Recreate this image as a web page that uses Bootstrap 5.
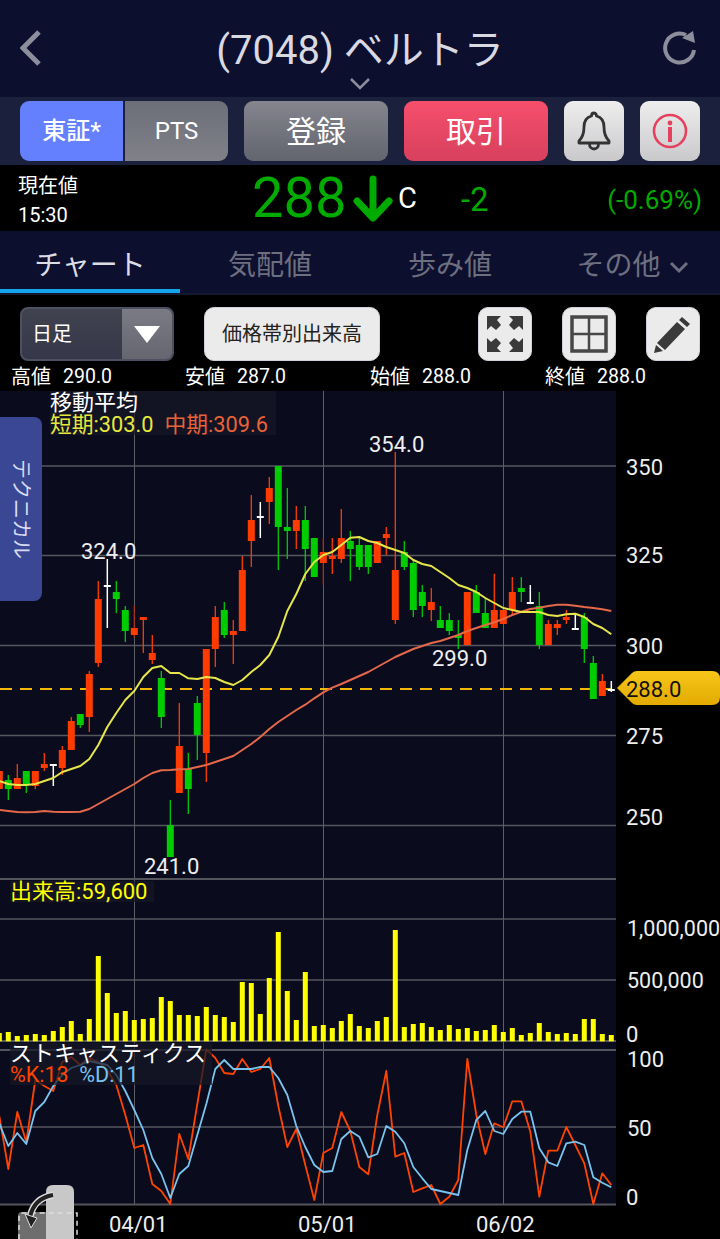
<!DOCTYPE html>
<html lang="ja">
<head>
<meta charset="utf-8">
<title>ベルトラ</title>
<link href="https://cdn.jsdelivr.net/npm/bootstrap@5.3.0/dist/css/bootstrap.min.css" rel="stylesheet">
<style>
html,body{margin:0;background:#000;width:720px;height:1239px;overflow:hidden}
body,svg text{font-family:Roboto,"Noto Sans CJK JP",sans-serif}
.app-head{height:97px;background:#0d0f2e;color:#d9d9e2}
.head-title{font-size:40px;line-height:46px;letter-spacing:0;white-space:nowrap;top:28px}
.head-caret{left:349px;top:77px}
.head-back{left:20px;top:30px}
.head-reload{left:662px;top:30px}
.toolbar-strip{height:68px;background:#1b203c;padding:4px 20px 4px}
.tool-btn{height:60px;border:0;border-radius:9px;color:#fff;padding:0;display:flex;align-items:center;justify-content:center}
.seg-blue{width:103px;border-radius:9px 0 0 9px;background:#6480ff;font-size:24px;font-weight:500}
.seg-gray{width:103px;margin-left:2px;border-radius:0 9px 9px 0;background:linear-gradient(#6c6e78,#808189);font-size:24px}
.wide-gray{width:144px;margin-left:16px;background:linear-gradient(#84858d,#62646e);font-size:30px}
.wide-red{width:144px;margin-left:16px;background:linear-gradient(#f64f6c,#d7405d);font-size:30px}
.square-btn{width:60px;margin-left:16px;background:linear-gradient(#eeeeee,#c9c9cc)}
.price-strip{height:66px;background:#000;color:#fff}
.price-label{width:234px;padding-left:18px;font-size:20px;line-height:29px;padding-top:7px}
.price-big{font-size:56px;line-height:66px;color:#00ab00;width:101px;margin-left:18px}
.price-arrow{margin-left:0;margin-top:9px}
.price-c{font-size:29px;margin-left:5px;line-height:66px}
.price-diff{font-size:33px;color:#00ab00;margin-left:44px;line-height:70px}
.price-pct{font-size:26px;color:#00ab00;margin-left:auto;padding-right:18px;line-height:70px}
.tab-strip{height:64px;background:#0d0f2e;border-bottom:2px solid #14182e}
.tab-cell{width:180px;font-size:28px;line-height:70px;color:#6d6f80;text-align:center;height:62px;white-space:nowrap}
.tab-active{color:#dcdce4;border-bottom:4px solid #13a4ec}
.tab-more{padding-left:5px}
.tools-strip{height:70px;background:#000;padding:12px 20px 0}
.range-select{width:154px;height:54px;border:2px solid #4d5060;border-radius:8px;overflow:hidden;background:linear-gradient(#40424f,#36384a)}
.range-text{flex:1;color:#fff;font-size:20px;line-height:50px;padding-left:10px}
.range-arrow{width:50px;background:linear-gradient(#7a7b84,#65666f);display:flex;align-items:center;justify-content:center}
.light-btn{height:54px;background:#ebebeb;border:1px solid #d0d0d8;border-radius:10px;color:#222;display:flex;align-items:center;justify-content:center;padding:0}
.profile-btn{width:176px;margin-left:30px;font-size:20px}
.icon-btn{width:54px}
.icon-gap{margin-left:30px}
.ohlc-strip{height:26px;background:#000;color:#fff;font-size:20px;line-height:24px;padding-left:11px;white-space:nowrap}
.ohlc-cell{display:flex}
.ohlc-cell span:last-child{margin-left:12px;font-size:19.5px}
.ohlc-a{width:174px}.ohlc-b{width:185px}.ohlc-c{width:175px}
.chart-wrap{height:848px;width:720px}
.chart-wrap svg{display:block}
.tech-tab{left:0;top:26px;width:42px;height:184px;background:#3a4794;border-radius:0 8px 8px 0;color:#d8dcf2;font-size:20px;writing-mode:vertical-rl;text-orientation:sideways;display:flex;align-items:center;justify-content:center;letter-spacing:0}
.legend-box{background:rgba(22,24,38,.72);color:#fff;white-space:nowrap}
.ma-legend{left:50px;top:0;width:226px;height:44px;font-size:22px;line-height:22px}
.ma-legend div:first-child{margin-top:1px}
.ma-legend div:last-child{font-size:21.8px;line-height:22px}
.vol-legend{left:10px;top:490px;width:144px;height:21px;font-size:22px;line-height:21px;color:#ff0}
.st-legend{left:10px;top:652px;width:202px;height:42px;font-size:22px;line-height:22px}
.st-legend div:last-child{font-size:21.5px;line-height:20px}
.tone-yellow{color:#e8e83c}.tone-orange{color:#e8623a}.tone-red{color:#ff4400}.tone-blue{color:#79c3ee}
</style>
</head>
<body>
<header class="app-head position-relative">
  <svg class="head-back position-absolute" width="24" height="38" viewBox="0 0 24 38"><path d="M19 2 3 18l16 16" fill="none" stroke="#8d8e9c" stroke-width="5"/></svg>
  <div class="head-title position-absolute w-100 text-center">(7048) ベルトラ</div>
  <svg class="head-caret position-absolute" width="22" height="14" viewBox="0 0 22 14"><path d="M2 2l9 9 9-9" fill="none" stroke="#8d8e9c" stroke-width="2.5"/></svg>
  <svg class="head-reload position-absolute" width="36" height="36" viewBox="0 0 36 36"><path d="M32 20A14.500 14.500 0 1 1 24 5" fill="none" stroke="#8d8e9c" stroke-width="4"/><path d="M20 8 31 1l2 12z" fill="#8d8e9c"/></svg>
</header>
<div class="toolbar-strip d-flex">
  <button class="tool-btn seg-blue">東証*</button>
  <button class="tool-btn seg-gray">PTS</button>
  <button class="tool-btn wide-gray">登録</button>
  <button class="tool-btn wide-red">取引</button>
  <button class="tool-btn square-btn"><svg width="36" height="40" viewBox="0 0 36 40"><path d="M18 2c-2 0-2.500 1.500-2.500 3C9.500 6.500 8 11 8 16c0 8-2 11-5 14v2h30v-2c-3-3-5-6-5-14 0-5-1.500-9.500-7.500-11 0-1.500-.5-3-2.500-3zM13.500 33c0 3 2 5 4.500 5s4.500-2 4.500-5" fill="none" stroke="#333" stroke-width="2.800" stroke-linejoin="round"/></svg></button>
  <button class="tool-btn square-btn"><svg width="36" height="36" viewBox="0 0 36 36"><circle cx="18" cy="18" r="16" fill="none" stroke="#e5415f" stroke-width="2.600"/><circle cx="18" cy="10" r="2.400" fill="#e5415f"/><rect x="16" y="14" width="4" height="15" fill="#e5415f"/></svg></button>
</div>
<div class="price-strip d-flex">
  <div class="price-label">現在値<br>15:30</div>
  <div class="price-big">288</div>
  <svg class="price-arrow" width="40" height="48" viewBox="0 0 40 48"><path d="M20 5v38M4 27l16 17 16-17" fill="none" stroke="#00ab00" stroke-width="7" stroke-linecap="round" stroke-linejoin="round"/></svg>
  <div class="price-c">C</div>
  <div class="price-diff">-2</div>
  <div class="price-pct">(-0.69%)</div>
</div>
<nav class="tab-strip d-flex">
  <div class="tab-cell tab-active">チャート</div>
  <div class="tab-cell">気配値</div>
  <div class="tab-cell">歩み値</div>
  <div class="tab-cell tab-more">その他<svg width="20" height="14" viewBox="0 0 20 14" class="ms-2"><path d="M2 2l8 8 8-8" fill="none" stroke="#6d6f80" stroke-width="3"/></svg></div>
</nav>
<div class="tools-strip d-flex">
  <div class="range-select d-flex"><div class="range-text">日足</div><div class="range-arrow"><svg width="26" height="18" viewBox="0 0 26 18"><path d="M0 1h26L13 18z" fill="#fff"/></svg></div></div>
  <button class="light-btn profile-btn">価格帯別出来高</button>
  <button class="light-btn icon-btn ms-auto"><svg width="40" height="40" viewBox="0 0 40 40" fill="#3a3a3a"><path id="ex" d="M2 2h14l-4 4 4 5-5 5-5-4-4 4z"/><path d="M2 2h14l-4 4 4 5-5 5-5-4-4 4z" transform="matrix(-1 0 0 1 40 0)"/><path d="M2 2h14l-4 4 4 5-5 5-5-4-4 4z" transform="matrix(1 0 0 -1 0 40)"/><path d="M2 2h14l-4 4 4 5-5 5-5-4-4 4z" transform="matrix(-1 0 0 -1 40 40)"/></svg></button>
  <button class="light-btn icon-btn icon-gap"><svg width="38" height="38" viewBox="0 0 38 38" fill="none" stroke="#474747"><rect x="2" y="2" width="34" height="34" stroke-width="3.500"/><path d="M19 2v34M2 19h34" stroke-width="2.500"/></svg></button>
  <button class="light-btn icon-btn icon-gap"><svg width="40" height="40" viewBox="0 0 40 40" fill="#3a3a3a"><path d="M29 3l8 7-3 3-8-7zM24 8l8 7-20 21-8-7zM3 31l7 6-9 2z"/></svg></button>
</div>
<div class="ohlc-strip d-flex">
  <div class="ohlc-cell ohlc-a"><span>高値</span><span>290.0</span></div>
  <div class="ohlc-cell ohlc-b"><span>安値</span><span>287.0</span></div>
  <div class="ohlc-cell ohlc-c"><span>始値</span><span>288.0</span></div>
  <div class="ohlc-cell"><span>終値</span><span>288.0</span></div>
</div>
<main class="chart-wrap position-relative">
  <svg id="plot" width="720" height="848" viewBox="0 391 720 848"></svg>
  <div class="tech-tab position-absolute">テクニカル</div>
  <div class="legend-box ma-legend position-absolute"><div>移動平均</div><div><span class="tone-yellow">短期:303.0</span>&nbsp; <span class="tone-orange">中期:309.6</span></div></div>
  <div class="legend-box vol-legend position-absolute">出来高:59,600</div>
  <div class="legend-box st-legend position-absolute"><div>ストキャスティクス</div><div><span class="tone-red">%K:13</span>&nbsp; <span class="tone-blue">%D:11</span></div></div>
</main>
<script src="https://cdn.jsdelivr.net/npm/bootstrap@5.3.0/dist/js/bootstrap.bundle.min.js"></script>
<script>
const RED='#ff3b00',GRN='#00cc00';
const candles=[['r',1010,1080,1023,1077],['g',1035,1110,1050,1077],['r',1002,1077,1044,1077],['g',1023,1089,1023,1065],['r',1023,1077,1023,1068],['r',969,1023,1002,1014],['w',1002,1068,1002,1008],['r',948,1035,960,1014],['r',861,960,873,960],['g',852,894,852,885],['r',723,906,732,861],['r',453,711,507,699],['w',387,594,465,471],['g',453,549,486,507],['g',528,636,540,603],['d',528,624,594,615],['r',561,669,561,570],['r',615,702,669,690],['g',723,894,744,861],['g',1110,1281,1185,1281],['r',819,1089,948,1089],['g',969,1152,1017,1077],['g',798,990,819,915],['r',657,1056,657,969],['r',528,711,561,657],['g',516,624,540,615],['r',570,702,603,615],['r',378,603,420,603],['r',195,411,270,333],['w',216,324,258,264],['r',141,282,174,216],['g',108,420,108,291],['g',174,387,291,303],['r',228,357,270,303],['g',228,453,270,357],
['g',324,441,324,441],['d',324,465,366,399],['r',324,432,378,387],['r',237,399,324,387],['g',303,453,333,357],['g',324,420,345,411],['g',345,432,345,411],['r',333,399,333,399],['r',291,375,312,324],['r',66,582,420,570],['g',333,420,366,411],['g',390,561,399,540],['g',465,561,486,528],['r',474,573,516,540],['g',528,594,570,594],['g',549,615,570,603],['g',570,657,615,624],['r',486,645,486,645],['g',465,549,486,549],['g',507,594,549,594],['r',431,594,540,594],['r',540,582,540,582],['r',441,552,486,540],['g',441,516,474,486],['w',465,522,516,522],['g',486,657,528,645],['r',570,645,582,645],['r',570,615,582,594],['r',540,582,561,570],['w',555,600,594,600],['g',549,699,561,657],['g',678,807,699,807],['r',732,798,753,798],['w',753,786,777,783]];
const yellow=[1053,1062,1065,1065,1062,1053,1044,1026,1017,1008,987,945,891,849,810,783,741,714,708,729,729,745,747,741,744,756,765,750,726,705,675,621,543,492,432,396,375,366,345,323,321,333,339,351,360,369,390,402,408,426,444,465,474,486,504,519,534,540,546,546,546,555,558,553,551,561,582,594,613];
const orange=[1140,1143,1146,1147,1146,1143,1145,1146,1146,1145,1137,1122,1107,1092,1077,1062,1044,1029,1021,1020,1018,1017,1011,1005,996,987,978,960,942,921,897,876,858,840,824,805,787,773,762,750,738,726,711,696,681,669,657,648,639,633,624,615,603,594,585,577,567,555,545,537,533,528,524,524,527,531,534,538,543];
const vol=[459,456,468,465,462,465,453,441,423,462,417,228,339,399,393,420,417,414,351,363,405,405,408,381,405,411,426,306,309,402,294,156,333,420,276,438,435,444,423,402,438,444,423,411,150,441,432,429,441,450,435,447,444,453,450,435,456,444,465,459,429,456,462,459,462,417,417,462,465];
const pK=[708,867,696,786,600,618,633,546,531,555,534,546,570,615,705,804,795,912,933,972,762,837,672,508,534,579,582,537,576,567,534,678,801,747,855,960,819,804,696,753,861,883,705,573,830,819,936,925,915,972,950,900,537,705,822,730,742,664,664,755,950,812,812,741,795,850,972,880,915];
const pD=[730,798,759,792,693,666,618,585,564,555,543,549,555,585,633,690,750,834,882,954,882,858,765,672,567,540,567,567,567,561,561,594,645,738,801,855,876,873,777,753,770,832,822,738,755,790,861,895,927,933,939,945,810,720,693,753,762,717,695,695,805,847,858,790,785,795,892,908,922];
const X=i=>-0.7+9*i, PY=v=>430+v/3, VY=v=>880+v/3;
const line=(a,f,c,w)=>`<polyline points="${a.map((v,i)=>X(i).toFixed(1)+','+f(v).toFixed(1)).join(' ')}" fill="none" stroke="${c}" stroke-width="${w}" stroke-linejoin="round"/>`;
const grid='#56565f';
let s=`<defs><linearGradient id="tagfill" x1="0" y1="0" x2="0" y2="1"><stop offset="0" stop-color="#f7c61a"/><stop offset="1" stop-color="#e3aa00"/></linearGradient></defs><rect x="0" y="391" width="616" height="814" fill="#0a0c1d"/>`;
for(const y of [466,555.5,645.5,735.5,825.5,919,980,1127])s+=`<line x1="0" x2="616" y1="${y}" y2="${y}" stroke="${grid}" stroke-width="1.500"/>`;
for(const x of [134.5,323.5,503.5]){s+=`<line x1="${x}" x2="${x}" y1="391" y2="1205" stroke="#5e5e66" stroke-width="1"/>`;}
for(const y of [879,1041,1050,1204.500])s+=`<line x1="0" x2="616" y1="${y}" y2="${y}" stroke="#55555e" stroke-width="2"/>`;
s+=`<line x1="0" x2="616" y1="689" y2="689" stroke="#f5b800" stroke-width="2" stroke-dasharray="12 8"/>`;
candles.forEach((c,i)=>{const x=X(i),col=c[0]=='r'?RED:c[0]=='g'?GRN:c[0]=='w'?'#fff':'#a83014',bc=c[0]=='d'?RED:col;
 s+=`<line x1="${x}" x2="${x}" y1="${PY(c[1])}" y2="${PY(c[2])}" stroke="${col}" stroke-width="${c[0]=='w'?1.500:1.300}"/>`;
 s+=`<rect x="${x-3.500}" y="${PY(c[3])}" width="7" height="${Math.max((c[4]-c[3])/3,2)}" fill="${bc}"/>`;});
s+=line(orange,PY,'#e5684a',2)+line(yellow,PY,'#e6e64a',2);
vol.forEach((v,i)=>{s+=`<rect x="${X(i)-2.500}" y="${VY(v)}" width="5" height="${VY(484)-VY(v)}" fill="#ffff00"/>`});
s+=line(pK,VY,'#ff4400',1.800)+line(pD,VY,'#79c3ee',1.800);
const txt=(x,y,t,fs=22)=>`<text x="${x}" y="${y}" fill="#eeeeee" font-size="${fs}">${t}</text>`;
[[626,475,'350'],[626,563,'325'],[626,654,'300'],[626,744,'275'],[626,825,'250'],[627,936,'1,000,000',21.5],[627,988,'500,000',21.5],[626,1042,'0'],[627,1067,'100'],[627,1136,'50'],[626,1205,'0'],[109,1232,'04/01'],[298,1232,'05/01'],[476,1232,'06/02'],[81,559,'324.0'],[369,452,'354.0'],[432,666,'299.0'],[144,874,'241.0']].forEach(a=>s+=txt(...a));
s+=`<path d="M617 688 632 673q2-2 5-2H712q8 0 8 8v18q0 8-8 8H637q-3 0-5-2z" fill="url(#tagfill)"/>`;
s+=`<text x="626" y="697" fill="#111" font-size="22">288.0</text>`;
s+=`<path d="M46 1192q0-7 7-7h14q7 0 7 7v47H46z" fill="#c8c8c8"/><path d="M18 1239v-23q0-4 4-4h24v27z" fill="#6e6e6e"/>`;
s+=`<path d="M19 1239v-22q0-4 4-4h54v26" fill="none" stroke="#ddd" stroke-width="1.500" stroke-dasharray="5 4"/>`;
s+=`<path d="M53 1195c-12 2-20 8-23 22" fill="none" stroke="#ddd" stroke-width="7"/><path d="M53 1195c-12 2-20 8-23 22" fill="none" stroke="#222" stroke-width="4"/><path d="M25 1214l12 4-6 10z" fill="#222" stroke="#ddd"/>`;
document.getElementById('plot').innerHTML=s;
</script>
</body>
</html>
